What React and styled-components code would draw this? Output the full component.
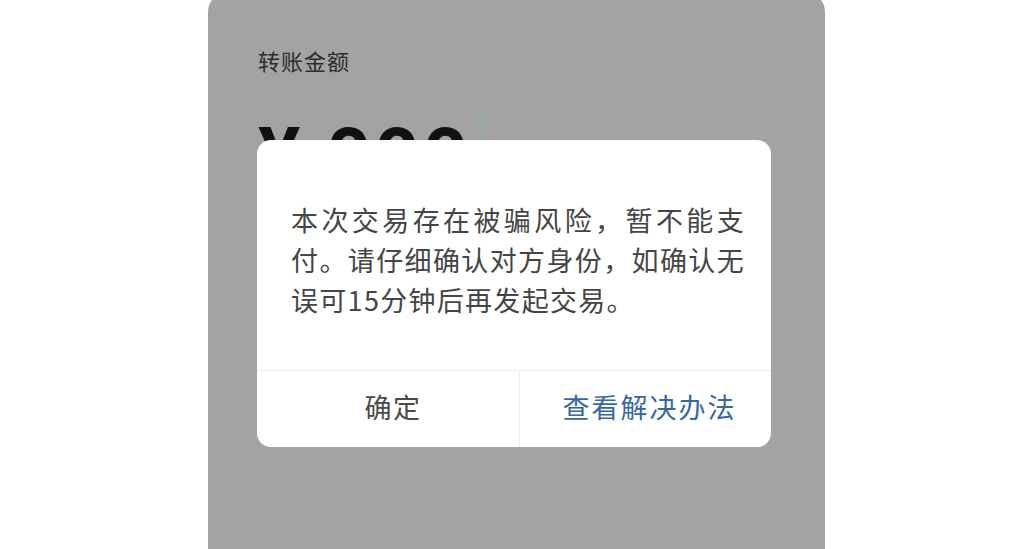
import React from "react";
import styled, { createGlobalStyle } from "styled-components";

const Global = createGlobalStyle`
  html, body {
    margin: 0;
    padding: 0;
    background: #ffffff;
    font-family: "Noto Sans CJK SC", "Noto Sans", sans-serif;
  }
`;

const Page = styled.div`
  width: 1026px;
  height: 549px;
  overflow: hidden;
  padding-left: 208px;
  box-sizing: border-box;
`;

const Panel = styled.div`
  position: relative;
  width: 617px;
  height: 580px;
  margin-top: -8px;
  background: #a3a3a3;
  border-radius: 20px 20px 0 0;
  padding: 53px 0 0 50px;
  box-sizing: border-box;
`;

const Label = styled.div`
  font-size: 22px;
  letter-spacing: 1px;
  color: #2b2b2b;
  line-height: 30px;
`;

const AmountRow = styled.div`
  display: flex;
  align-items: flex-start;
  margin-top: 42px;
`;

const Amount = styled.div`
  font-family: "Roboto", "Noto Sans", sans-serif;
  font-weight: 700;
  font-size: 79px;
  line-height: 80px;
  color: #111;
  letter-spacing: 3px;
  white-space: pre;
`;

const Cursor = styled.span`
  display: inline-block;
  width: 2px;
  height: 60px;
  margin-left: 8px;
  margin-top: -5px;
  background: #86b39c;
`;

const Dialog = styled.div`
  position: absolute;
  left: 49px;
  top: 148px;
  width: 514px;
  background: #ffffff;
  border-radius: 14px;
  overflow: hidden;
`;

const Message = styled.p`
  margin: 0;
  padding: 60px 26px 50px 34px;
  font-size: 27px;
  font-weight: 400;
  line-height: 40px;
  letter-spacing: 1.3px;
  text-align: justify;
  color: #454545;
`;

const Actions = styled.div`
  display: grid;
  grid-template-columns: 262px 1fr;
  border-top: 1px solid #ededed;
  height: 76px;
`;

const Action = styled.button`
  border: none;
  background: none;
  font-family: inherit;
  font-size: 27px;
  font-weight: 400;
  letter-spacing: ${(p) => (p.$primary ? "2px" : "1.5px")};
  color: ${(p) => (p.$primary ? "#3767a6" : "#4a4a4a")};
  border-left: ${(p) => (p.$primary ? "1px solid #ededed" : "none")};
  padding: 0 0 6px ${(p) => (p.$primary ? "8px" : "10px")};
  cursor: pointer;
`;

export default function App() {
  return (
    <Page>
      <Global />
      <Panel>
        <Label>转账金额</Label>
        <AmountRow>
          <Amount>¥ 000</Amount>
          <Cursor />
        </AmountRow>
        <Dialog>
          <Message>
            本次交易存在被骗风险，暂不能支付。请仔细确认对方身份，如确认无误可15分钟后再发起交易。
          </Message>
          <Actions>
            <Action>确定</Action>
            <Action $primary>查看解决办法</Action>
          </Actions>
        </Dialog>
      </Panel>
    </Page>
  );
}
